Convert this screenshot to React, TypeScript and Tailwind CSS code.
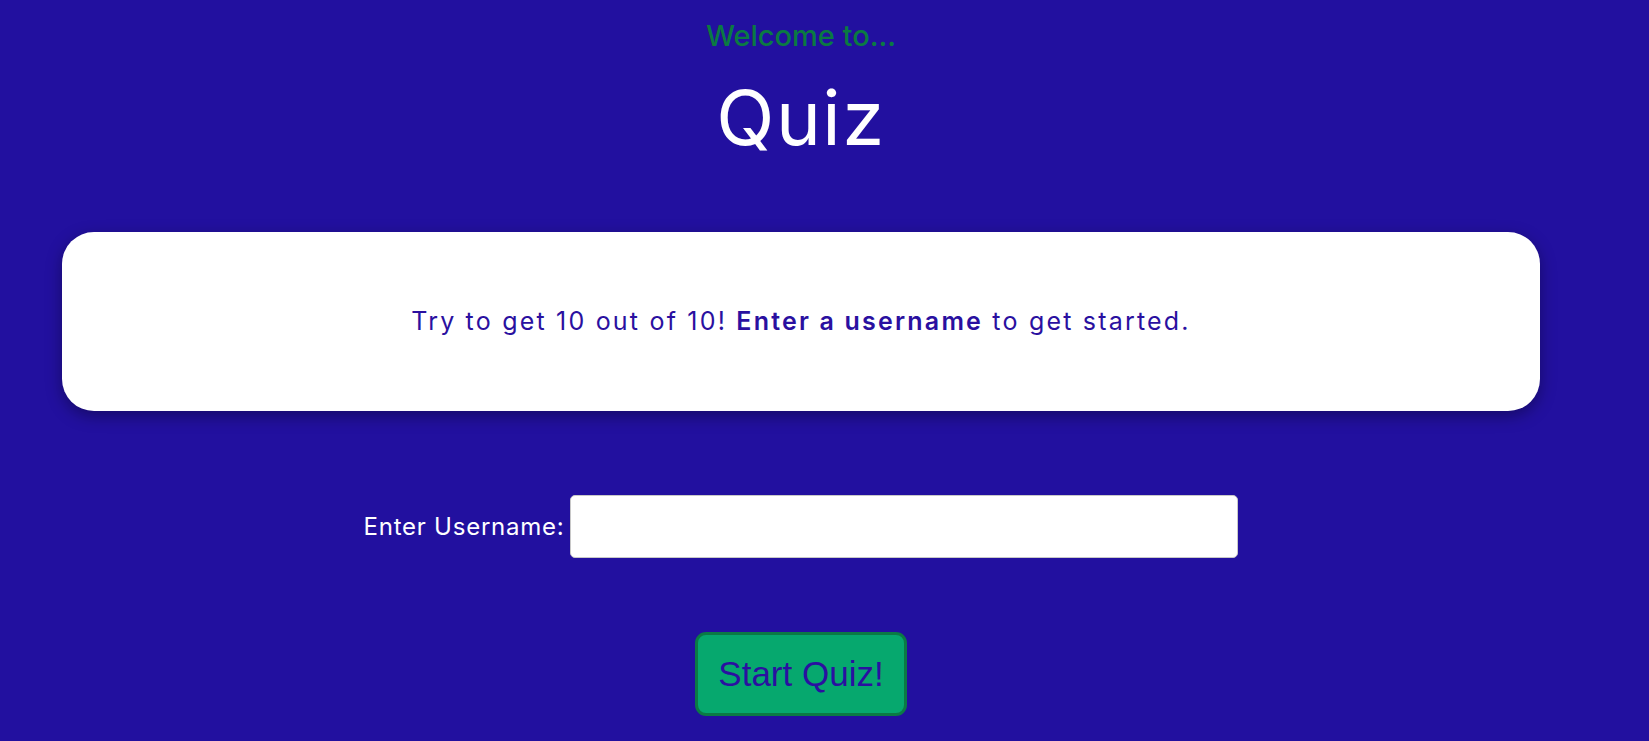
import React from "react";

export default function App() {
  return (
    <div className="min-h-screen bg-[#22109f] font-['Inter',sans-serif]">
      <div className="w-[1602px] px-[62px] flex flex-col items-center">
        <p className="mt-[21px] text-[29px] leading-none font-medium text-[#0a7a42]">Welcome to...</p>
        <h1 className="mt-[29px] text-[76px] leading-none tracking-[1.5px] text-white">Quiz</h1>
        <div className="mt-[77px] w-full h-[179px] flex items-center justify-center rounded-[32px] bg-white shadow-[0_5px_16px_rgba(0,0,0,0.35)]">
          <p className="text-[25px] leading-none tracking-[2.2px] text-[#2a10a0]">
            Try to get 10 out of 10! <span className="font-semibold">Enter a username</span> to get started.
          </p>
        </div>
        <div className="mt-[84px] flex items-center gap-[6px]">
          <label htmlFor="username" className="text-[24px] leading-none tracking-[0.75px] text-white">
            Enter Username:
          </label>
          <input
            id="username"
            type="text"
            className="w-[668px] h-[63px] rounded-[5px] border border-[#c8c8c8] bg-white px-2 outline-none"
          />
        </div>
        <button className="mt-[74px] w-[212px] h-[84px] rounded-[11px] border-[3px] border-[#0b7a45] bg-[#06a86e] font-['Liberation_Sans',Arial,sans-serif] text-[35px] text-[#2a10a0]">
          Start Quiz!
        </button>
      </div>
    </div>
  );
}
